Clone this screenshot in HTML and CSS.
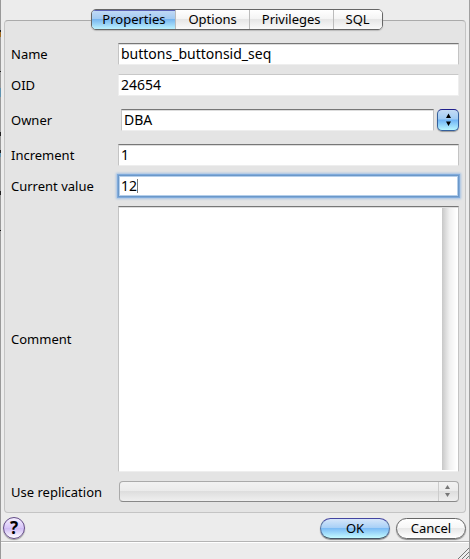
FILE: index.html
```html
<!DOCTYPE html>
<html lang="en">
<head>
    <meta charset="UTF-8">
    <title>buttons_buttonsid_seq</title>
    <link rel="stylesheet" href="styles.css">
</head>
<body>
<form class="dialog">
    <div class="tabs">
        <button type="button" class="tab active">Properties</button>
        <button type="button" class="tab">Options</button>
        <button type="button" class="tab">Privileges</button>
        <button type="button" class="tab">SQL</button>
    </div>
    <div class="panel">
        <div class="row">
            <label for="name">Name</label>
            <input type="text" id="name" class="field" value="buttons_buttonsid_seq">
        </div>
        <div class="row">
            <label for="oid">OID</label>
            <input type="text" id="oid" class="field readonly" value="24654" readonly>
        </div>
        <div class="row owner">
            <label for="owner">Owner</label>
            <div class="combo">
                <input type="text" id="owner" class="field" value="DBA">
                <button type="button" class="combo-btn" aria-label="Choose owner">
                    <svg width="7" height="14" viewBox="0 0 7 14"><path d="M3.500 0.500L6 5H1zM1 8.500h5L3.500 13z"/></svg>
                </button>
            </div>
        </div>
        <div class="row">
            <label for="increment">Increment</label>
            <input type="text" id="increment" class="field" value="1">
        </div>
        <div class="row">
            <label for="current">Current value</label>
            <input type="text" id="current" class="field current" value="12">
        </div>
        <div class="row comment">
            <label for="comment">Comment</label>
            <textarea id="comment" class="field"></textarea>
        </div>
        <div class="row">
            <label for="replication">Use replication</label>
            <div class="select">
                <select id="replication" disabled></select>
                <svg class="arrows" width="7" height="14" viewBox="0 0 7 14"><path d="M3.500 1L6 5H1zM1 9h5L3.500 13z"/></svg>
            </div>
        </div>
    </div>
    <div class="actions">
        <button type="button" class="help" aria-label="Help">?</button>
        <button type="submit" class="btn ok">OK</button>
        <button type="button" class="btn">Cancel</button>
    </div>
    <div class="statusbar">
        <svg width="12" height="12" viewBox="0 0 12 12"><path d="M1 12L12 1M5 12l7-7M9 12l3-3"/></svg>
    </div>
</form>
</body>
</html>
```
FILE: styles.css
```css
* {
    box-sizing: border-box;
    margin: 0;
    padding: 0;
}
body {
    background-color: #ececec;
    font-family: "Noto Sans", "Open Sans", sans-serif;
    font-size: 13px;
    color: #000;
}
button, input, select, textarea {
    font: inherit;
    color: inherit;
}
.dialog {
    display: flex;
    flex-direction: column;
    min-height: 100vh;
    padding: 9px 0 0 1px;
    border-right: 1px solid #a0a0a0;
    /* strip of the window behind, along the left edge */
    background:
        linear-gradient(#999 30px, #222 30px 32px, #a06a20 32px 37px, #999 37px 71px, #222 71px 72px,
            #999 72px 88px, #5f93b0 88px 97px, #999 97px 132px, #222 132px 136px, #999 136px 150px,
            #222 150px 153px, #5f93b0 153px 157px, #999 157px 191px, #222 191px 195px,
            #999 195px 230px, #111 230px 231px, #999 231px) left top / 1px 100% no-repeat;
}

/* tabs sit on the top edge of the panel */
.tabs {
    position: relative;
    z-index: 1;
    display: flex;
    align-self: center;
    height: 21px;
    margin-left: 4px;
    border: 1px solid #666;
    border-radius: 5px;
    box-shadow: 0 1px 1px #bbb;
    overflow: hidden;
}
.tab {
    padding: 0 12px;
    border: 0;
    border-left: 1px solid #bcbcbc;
    background: linear-gradient(#fff, #f4f4f4 48%, #e6e6e6 50%, #fafafa);
    line-height: 19px;
}
.tab.active {
    padding: 0 10px;
    border-left: 0;
    background: linear-gradient(#c4dbf5, #a1caf2 48%, #78b6ef 50%, #bcf2ff);
    box-shadow: inset 0 1px #5a62b4;
}

.panel {
    flex: 1;
    display: flex;
    flex-direction: column;
    gap: 9px;
    margin: -10px 3px 0;
    padding: 22px 6px 10px;
    border: 1px solid #c4c4c4;
    border-top-color: #aaa;
    border-radius: 4px;
    background-color: #e4e4e4;
}
.row {
    display: grid;
    grid-template-columns: 107px 1fr;
    align-items: center;
}
.owner {
    padding: 4px 0;
}
.field {
    width: 100%;
    height: 22px;
    padding: 0 2px 2px;
    border: 1px solid #c4c4c4;
    border-top-color: #777;
    border-bottom-color: #eee;
    background-color: #fff;
    box-shadow: inset 0 1px #ddd;
    font-size: 14px;
    outline: none;
}
.readonly {
    border-color: #c8c8c8 #eee #eee;
    box-shadow: none;
}
.combo {
    display: flex;
    align-items: center;
    gap: 3px;
    padding-left: 3px;
}
.combo-btn {
    flex: none;
    display: flex;
    align-items: center;
    justify-content: center;
    width: 22px;
    height: 22px;
    border: 1px solid #35609c;
    border-top-color: #20208c;
    border-radius: 5px;
    background: linear-gradient(#c4dbf5, #a0ccf5 45%, #70b4f5 50%, #b8f6ff);
    box-shadow: 0 1px 1px #999;
}
.current {
    border-color: #6c98c8;
    box-shadow: 0 0 0 1px #80abdc, 0 0 2px 2px #a4c2e4, inset 0 0 0 1px #b4cfec;
    /* text cursor after the value */
    background: linear-gradient(#777, #777) 18px 3px / 1px 14px no-repeat #fff;
    caret-color: transparent;
}
.comment {
    flex: 1;
}
.comment .field {
    align-self: stretch;
    height: auto;
    min-height: 100px;
    resize: none;
    /* empty scrollbar track */
    background: linear-gradient(90deg, #c8c8c8, #f0f0f0 50%, #fff) right 1px top 1px / 15px calc(100% - 2px) no-repeat #fff;
}

.select {
    position: relative;
    padding-left: 1px;
}
.select select {
    display: block;
    width: 100%;
    height: 21px;
    border: 1px solid #aaa;
    border-bottom-color: #888;
    border-radius: 4px;
    appearance: none;
    opacity: 1;
    background:
        linear-gradient(#ccc, #ccc) right 19px top / 1px 100% no-repeat,
        linear-gradient(#f2f2f2, #ebebeb 48%, #dedede 50%, #efefef);
}
.arrows {
    position: absolute;
    top: 3px;
    right: 8px;
    fill: #777;
    pointer-events: none;
}

.actions {
    display: flex;
    align-items: center;
    gap: 6px;
    padding: 4px 3px 2px 2px;
}
.help {
    width: 22px;
    height: 22px;
    margin-right: auto;
    border: 1px solid #634b87;
    border-radius: 50%;
    background: linear-gradient(#f4efff, #d8c6f8 48%, #cdb8f4 50%, #fff);
    box-shadow: 0 1px 1px #999;
    font-size: 17px;
    font-weight: bold;
    line-height: 20px;
}
.btn {
    width: 70px;
    height: 21px;
    border: 1px solid #666;
    border-radius: 11px;
    background: linear-gradient(#fff, #f6f6f6 48%, #e8e8e8 50%, #fff);
    box-shadow: 0 1px 1px #888;
    line-height: 18px;
}
.ok {
    border-color: #4444a0 #55709c #456;
    background: linear-gradient(#d6e6fa, #a6cff7 48%, #7dbcf5 50%, #c4faff);
}
.statusbar {
    display: flex;
    align-items: flex-end;
    justify-content: flex-end;
    height: 18px;
    border-top: 1px solid #b4b4b4;
    box-shadow: inset 0 1px #fff;
}
.statusbar svg {
    stroke: #777;
}
```
